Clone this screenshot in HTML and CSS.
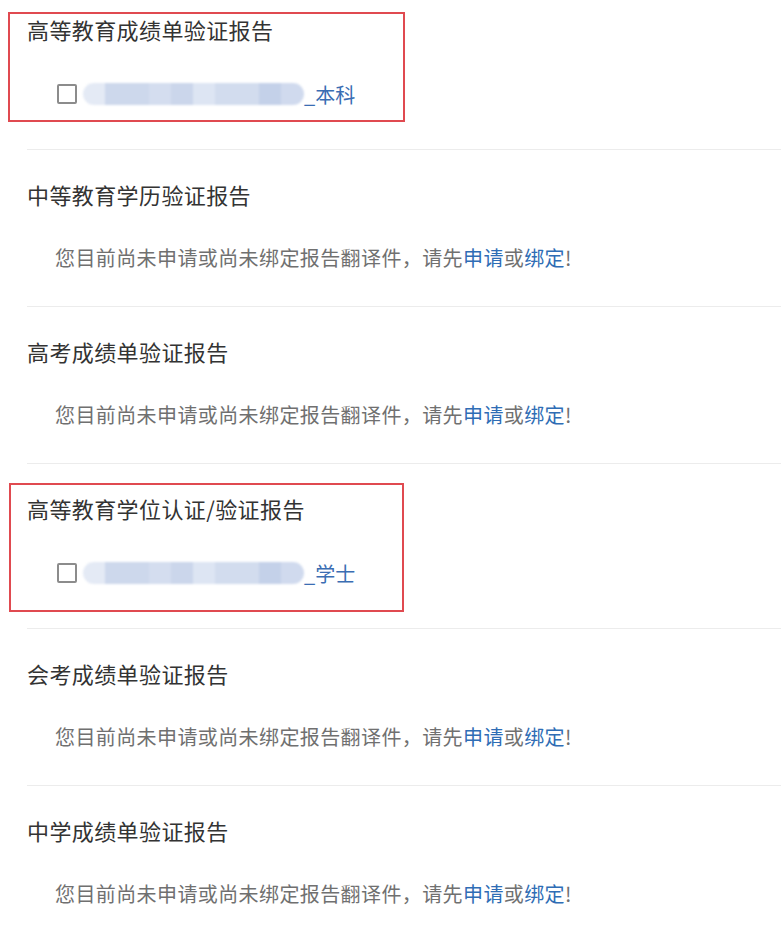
FILE: index.html
```html
<!DOCTYPE html>
<html lang="zh-CN">
<head>
<meta charset="utf-8">
<title>报告</title>
<link rel="stylesheet" href="styles.css">
</head>
<body>
<div class="list">
  <section class="section">
    <div class="mark mark-1"></div>
    <div class="title">高等教育成绩单验证报告</div>
    <label class="check-row"><span class="box"></span><span class="blur"></span><span class="tag">_本科</span></label>
  </section>
  <section class="section">
    <div class="title">中等教育学历验证报告</div>
    <div class="msg">您目前尚未申请或尚未绑定报告翻译件，请先<a class="link">申请</a>或<a class="link">绑定</a>!</div>
  </section>
  <section class="section">
    <div class="title">高考成绩单验证报告</div>
    <div class="msg">您目前尚未申请或尚未绑定报告翻译件，请先<a class="link">申请</a>或<a class="link">绑定</a>!</div>
  </section>
  <section class="section">
    <div class="mark mark-2"></div>
    <div class="title">高等教育学位认证/验证报告</div>
    <label class="check-row"><span class="box"></span><span class="blur"></span><span class="tag">_学士</span></label>
  </section>
  <section class="section">
    <div class="title">会考成绩单验证报告</div>
    <div class="msg">您目前尚未申请或尚未绑定报告翻译件，请先<a class="link">申请</a>或<a class="link">绑定</a>!</div>
  </section>
  <section class="section">
    <div class="title">中学成绩单验证报告</div>
    <div class="msg">您目前尚未申请或尚未绑定报告翻译件，请先<a class="link">申请</a>或<a class="link">绑定</a>!</div>
  </section>
</div>
</body>
</html>
```
FILE: styles.css
```css
html, body {
  margin: 0;
  padding: 0;
  background: #ffffff;
}
body {
  font-family: "Noto Sans CJK SC", "Noto Sans", sans-serif;
  overflow: hidden;
}
.list {
  display: flex;
  flex-direction: column;
}
.section {
  position: relative;
  margin-left: 27px;
  padding: 29px 0 33px 0;
  border-top: 1px solid #ececec;
}
.section:first-child {
  border-top: none;
  padding-top: 14px;
}
.title {
  font-size: 22px;
  line-height: 30px;
  color: #333333;
  letter-spacing: 0.4px;
  white-space: nowrap;
}
.msg {
  margin-top: 34px;
  padding-left: 28px;
  font-size: 20px;
  line-height: 30px;
  color: #707070;
  letter-spacing: 0.4px;
  white-space: nowrap;
}
.link {
  color: #2f6db5;
  text-decoration: none;
}
.check-row {
  margin-top: 35px;
  margin-bottom: 7px;
  padding-left: 30px;
  height: 30px;
  display: flex;
  align-items: center;
}
.box {
  width: 16px;
  height: 16px;
  border: 2px solid #8c8c8c;
  border-radius: 2px;
  background: #fff;
  flex: none;
}
.blur {
  width: 221px;
  height: 22px;
  margin-left: 6px;
  border-radius: 11px;
  flex: none;
  filter: blur(1.2px);
  background: linear-gradient(90deg,
    #e4eaf5 0, #e4eaf5 22px,
    #cdd8ec 22px, #cdd8ec 66px,
    #d4ddef 66px, #d4ddef 88px,
    #cbd6eb 88px, #cbd6eb 110px,
    #dde5f3 110px, #dde5f3 132px,
    #d2dcee 132px, #d2dcee 176px,
    #c4d1e9 176px, #c4d1e9 198px,
    #d0daee 198px, #d0daee 221px);
}
.tag {
  font-size: 20px;
  line-height: 30px;
  color: #3a6db3;
  padding-top: 2px;
}
.mark {
  position: absolute;
  border: 2.5px solid #e04a50;
  box-sizing: border-box;
  pointer-events: none;
}
.mark-1 {
  top: 12px;
  left: -19px;
  width: 397px;
  height: 110px;
}
.mark-2 {
  top: 19px;
  left: -18px;
  width: 395px;
  height: 129px;
}
```
